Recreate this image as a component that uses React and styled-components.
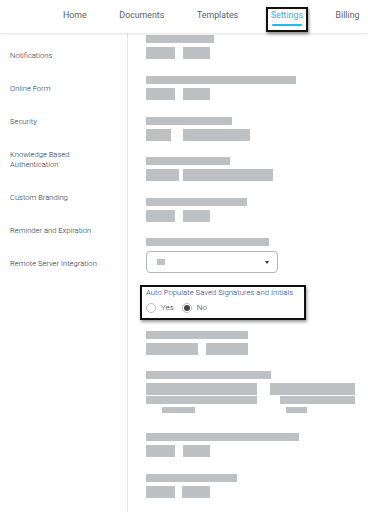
import React from "react";
import styled, { createGlobalStyle } from "styled-components";

const GlobalStyle = createGlobalStyle`
  html, body {
    margin: 0;
    padding: 0;
    background: #ffffff;
    font-family: Roboto, "Liberation Sans", sans-serif;
  }
`;

const navItems = ["Home", "Documents", "Templates", "Settings", "Billing"];

const sideItems = [
  "Notifications",
  "Online Form",
  "Security",
  "Knowledge Based Authentication",
  "Custom Branding",
  "Reminder and Expiration",
  "Remote Server Integration",
];

const simpleGroups = [
  { bar: 68, boxes: [29, 27], gap: 8, after: 17 },
  { bar: 150, boxes: [29, 27], gap: 8, after: 17 },
  { bar: 86, boxes: [25, 67], gap: 12, after: 16 },
  { bar: 84, boxes: [33, 90], gap: 4, after: 17 },
  { bar: 101, boxes: [29, 27], gap: 8, after: 16 },
];

const App = () => {
  return (
    <Page>
      <GlobalStyle />
      <Header>
        <Nav>
          {navItems.map((item) => (
            <NavItem key={item} active={item === "Settings"}>
              <NavLabel active={item === "Settings"}>{item}</NavLabel>
              <Underline active={item === "Settings"} />
            </NavItem>
          ))}
        </Nav>
      </Header>
      <Body>
        <Sidebar>
          {sideItems.map((item) => (
            <SideItem key={item}>{item}</SideItem>
          ))}
        </Sidebar>
        <Content>
          {simpleGroups.map((g, i) => (
            <Group key={i} after={g.after}>
              <Bar width={g.bar} />
              <Row gap={g.gap}>
                <Block width={g.boxes[0]} />
                <Block width={g.boxes[1]} />
              </Row>
            </Group>
          ))}

          <Group after={12} spacing={5}>
            <Bar width={123} />
            <Select>
              <Block width={8} height={6} />
              <Caret />
            </Select>
          </Group>

          <Highlight>
            <Question>Auto Populate Saved Signatures and Initials</Question>
            <Radios>
              <RadioOption>
                <Radio />
                Yes
              </RadioOption>
              <RadioOption>
                <Radio checked />
                No
              </RadioOption>
            </Radios>
          </Highlight>

          <Group after={16}>
            <Bar width={102} />
            <Row gap={8}>
              <Block width={52} />
              <Block width={42} />
            </Row>
          </Group>

          <Group after={20}>
            <Bar width={125} />
            <Columns>
              <Column>
                <Block width={111} height={12} />
                <Block width={111} height={8} />
                <Block width={33} height={6} indent={16} />
              </Column>
              <Column>
                <Block width={85} height={12} />
                <Block width={75} height={8} indent={10} />
                <Block width={21} height={6} indent={16} />
              </Column>
            </Columns>
          </Group>

          <Group after={17}>
            <Bar width={153} />
            <Row gap={8}>
              <Block width={29} />
              <Block width={27} />
            </Row>
          </Group>

          <Group after={0}>
            <Bar width={91} />
            <Row gap={7}>
              <Block width={29} />
              <Block width={28} />
            </Row>
          </Group>
        </Content>
      </Body>
    </Page>
  );
};

const Page = styled.div`
  width: 368px;
  height: 512px;
  overflow: hidden;
  display: flex;
  flex-direction: column;
  background: #ffffff;
`;

const Header = styled.header`
  position: relative;
  z-index: 2;
  height: 33px;
  flex-shrink: 0;
  background: #ffffff;
  box-shadow: 0 1px 3px rgba(0, 0, 0, 0.12);
`;

const Nav = styled.nav`
  display: flex;
  gap: 22.7px;
  padding: 7px 0 0 58px;
`;

const NavItem = styled.div`
  height: 25px;
  box-sizing: border-box;
  padding: 0 3px;
  border: 2px solid ${(p) => (p.active ? "#111111" : "transparent")};
  box-shadow: ${(p) => (p.active ? "1px 2px 3px rgba(0,0,0,0.45)" : "none")};
  display: flex;
  flex-direction: column;
`;

const NavLabel = styled.span`
  font-size: 8.8px;
  line-height: 12px;
  color: ${(p) => (p.active ? "#29b6f6" : "#5a6068")};
  white-space: nowrap;
`;

const Underline = styled.div`
  height: 2px;
  margin: 3px 1px 0;
  border-radius: 1px;
  background: ${(p) => (p.active ? "#29b6f6" : "transparent")};
`;

const Body = styled.div`
  flex: 1;
  display: flex;
`;

const Sidebar = styled.aside`
  width: 127px;
  flex-shrink: 0;
  border-right: 1px solid #e6e7e8;
  padding-top: 6px;
  box-sizing: content-box;
`;

const SideItem = styled.div`
  padding: 11.5px 20px 11.5px 10px;
  font-size: 7.6px;
  font-weight: 300;
  line-height: 10px;
  color: #253040;
`;

const Content = styled.main`
  flex: 1;
  padding: 2px 0 0 18px;
  display: flex;
  flex-direction: column;
`;

const Group = styled.div`
  display: flex;
  flex-direction: column;
  gap: ${(p) => p.spacing || 4}px;
  margin-bottom: ${(p) => p.after}px;
`;

const Bar = styled.div`
  width: ${(p) => p.width}px;
  height: 8px;
  background: #bec1c4;
`;

const Row = styled.div`
  display: flex;
  gap: ${(p) => p.gap}px;
`;

const Block = styled.div`
  width: ${(p) => p.width}px;
  height: ${(p) => p.height || 12}px;
  margin-left: ${(p) => p.indent || 0}px;
  background: #bec1c4;
  flex-shrink: 0;
`;

const Columns = styled.div`
  display: grid;
  grid-template-columns: 111px 85px;
  column-gap: 13px;
`;

const Column = styled.div`
  display: flex;
  flex-direction: column;
  gap: 1px;

  & > div:last-child {
    margin-top: 2px;
  }
`;

const Select = styled.div`
  width: 132px;
  height: 22px;
  box-sizing: border-box;
  border: 1px solid #b3b6ba;
  border-radius: 4px;
  display: flex;
  align-items: center;
  justify-content: space-between;
  padding: 0 8px 0 10px;
`;

const Caret = styled.div`
  width: 0;
  height: 0;
  border-left: 2.5px solid transparent;
  border-right: 2.5px solid transparent;
  border-top: 3px solid #333;
`;

const Highlight = styled.div`
  width: 166px;
  height: 35px;
  box-sizing: border-box;
  margin: 0 0 11px -6px;
  padding: 0 0 0 4px;
  border: 2px solid #111111;
  box-shadow: 1px 2px 3px rgba(0, 0, 0, 0.4);
  display: flex;
  flex-direction: column;
`;

const Question = styled.div`
  font-size: 7.75px;
  font-weight: 300;
  line-height: 12px;
  color: #1f3a78;
  white-space: nowrap;
`;

const Radios = styled.div`
  display: flex;
  gap: 8px;
  margin-top: 3px;
`;

const RadioOption = styled.label`
  display: flex;
  align-items: center;
  gap: 5px;
  font-size: 8px;
  font-weight: 300;
  line-height: 12px;
  color: #253040;
`;

const Radio = styled.span`
  width: 10px;
  height: 10px;
  box-sizing: border-box;
  border-radius: 50%;
  border: 1px solid #b8bbbf;
  display: flex;
  align-items: center;
  justify-content: center;

  &::after {
    content: "";
    width: 6px;
    height: 6px;
    border-radius: 50%;
    background: ${(p) => (p.checked ? "#444" : "transparent")};
  }
`;

export default App;
